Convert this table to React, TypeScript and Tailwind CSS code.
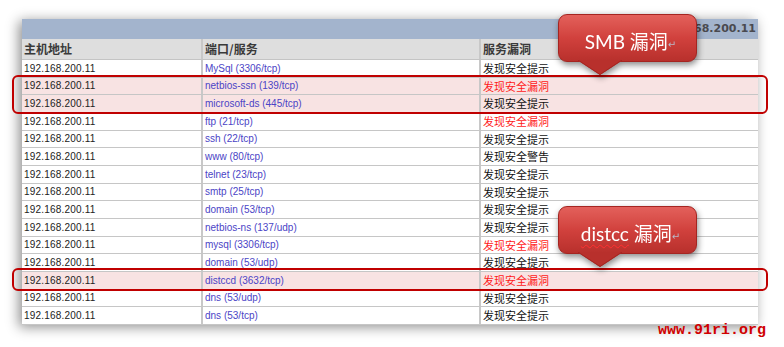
import React from 'react';

type Row = { service: string; level: string; danger?: boolean; mark?: boolean };

const rows: Row[] = [
  { service: 'MySql (3306/tcp)', level: '发现安全提示' },
  { service: 'netbios-ssn (139/tcp)', level: '发现安全漏洞', danger: true, mark: true },
  { service: 'microsoft-ds (445/tcp)', level: '发现安全提示', mark: true },
  { service: 'ftp (21/tcp)', level: '发现安全漏洞', danger: true },
  { service: 'ssh (22/tcp)', level: '发现安全提示' },
  { service: 'www (80/tcp)', level: '发现安全警告' },
  { service: 'telnet (23/tcp)', level: '发现安全提示' },
  { service: 'smtp (25/tcp)', level: '发现安全提示' },
  { service: 'domain (53/tcp)', level: '发现安全提示' },
  { service: 'netbios-ns (137/udp)', level: '发现安全提示' },
  { service: 'mysql (3306/tcp)', level: '发现安全漏洞', danger: true },
  { service: 'domain (53/udp)', level: '发现安全提示' },
  { service: 'distccd (3632/tcp)', level: '发现安全漏洞', danger: true, mark: true },
  { service: 'dns (53/udp)', level: '发现安全提示' },
  { service: 'dns (53/tcp)', level: '发现安全提示' },
];

const latin = "font-['Liberation_Sans','Noto_Sans_CJK_SC',sans-serif]";
const cjk = "font-['Noto_Sans_CJK_SC',sans-serif]";

// red speech bubble with a pointer going down
const Callout: React.FC<{ top: number; children: React.ReactNode }> = ({ top, children }) => (
  <div
    className="absolute left-[558px] w-[139px] h-[62px] drop-shadow-[1px_3px_3px_rgba(0,0,0,0.45)]"
    style={{ top }}
  >
    <div className="h-[48px] rounded-[9px] border border-[#a52521] bg-gradient-to-b from-[#e3605b] via-[#d1413d] to-[#b8302c] flex items-center justify-center pt-[7px] pl-[6px]">
      <span className="text-white text-[19px] leading-none font-['Lato','Noto_Sans_CJK_SC',sans-serif] whitespace-nowrap">
        {children}
      </span>
      <span className="text-[#b9b9c8] text-[10px] leading-none mt-[6px] font-['DejaVu_Sans',sans-serif]">↵</span>
    </div>
    <svg className="absolute left-[19px] top-[46px]" width="46" height="16" viewBox="0 0 46 16">
      <path d="M0 0 L46 0 L23 15 Z" fill="#b8302c" />
      <path d="M1 0 L23 14.5 L45 0" fill="none" stroke="#a52521" strokeWidth="1" />
    </svg>
  </div>
);

export default function App() {
  return (
    <div className="relative w-[784px] h-[347px] overflow-hidden bg-white pl-[22px] pt-[19px]">
      <div className="w-[736px] bg-white shadow-[-3px_2px_12px_rgba(0,0,0,0.45)]">
        {/* title bar */}
        <div className="h-[20px] bg-[#a3b4cd] flex items-center justify-end pr-[2px]">
          <span className="text-[11px] font-bold text-[#4a4a50] font-['DejaVu_Sans',sans-serif]">192.168.200.11</span>
        </div>
        {/* column headings */}
        <div className={`flex h-[21px] bg-[#dedede] border-b border-[#c4c4c4] text-[12px] font-bold text-[#3a3a3a] ${cjk}`}>
          <div className="w-[181px] pl-[2px] flex items-center border-r-2 border-[#c8c8c8]">主机地址</div>
          <div className="w-[278px] pl-[2px] flex items-center border-r-2 border-[#c8c8c8]">端口/服务</div>
          <div className="flex-1 pl-[2px] flex items-center">服务漏洞</div>
        </div>
        {rows.map((r, i) => (
          <div
            key={i}
            className={`flex h-[17.67px] border-b border-[#c6c6c6] ${r.mark ? 'bg-[#f8e3e3]' : 'bg-white'}`}
          >
            <div className={`w-[181px] pl-[2px] flex items-center border-r-2 border-[#c8c8c8] text-[10px] text-[#222] tracking-[0.2px] ${latin}`}>
              192.168.200.11
            </div>
            <div className={`w-[278px] pl-[2px] flex items-center border-r-2 border-[#c8c8c8] text-[10px] text-[#4b44c6] ${latin}`}>
              {r.service}
            </div>
            <div className={`flex-1 pl-[2px] flex items-center text-[11px] ${cjk} ${r.danger ? 'text-[#ff1a1a]' : 'text-[#111]'}`}>
              {r.level}
            </div>
          </div>
        ))}
      </div>

      {/* highlight frames */}
      <div className="absolute left-[12px] top-[75px] w-[756px] h-[39px] rounded-[6px] border-2 border-[#c00000]" />
      <div className="absolute left-[12px] top-[268px] w-[756px] h-[23px] rounded-[6px] border-2 border-[#c00000]" />

      <Callout top={14}>SMB 漏洞</Callout>
      <Callout top={206}>
        <span className="underline decoration-wavy decoration-[#ff3030] decoration-1 underline-offset-[3px]">distcc</span> 漏洞
      </Callout>

      <div className="absolute left-[658px] top-[323px] text-[15px] font-bold leading-none text-[#d00000] font-['Liberation_Mono',monospace]">
        www.91ri.org
      </div>
    </div>
  );
}
